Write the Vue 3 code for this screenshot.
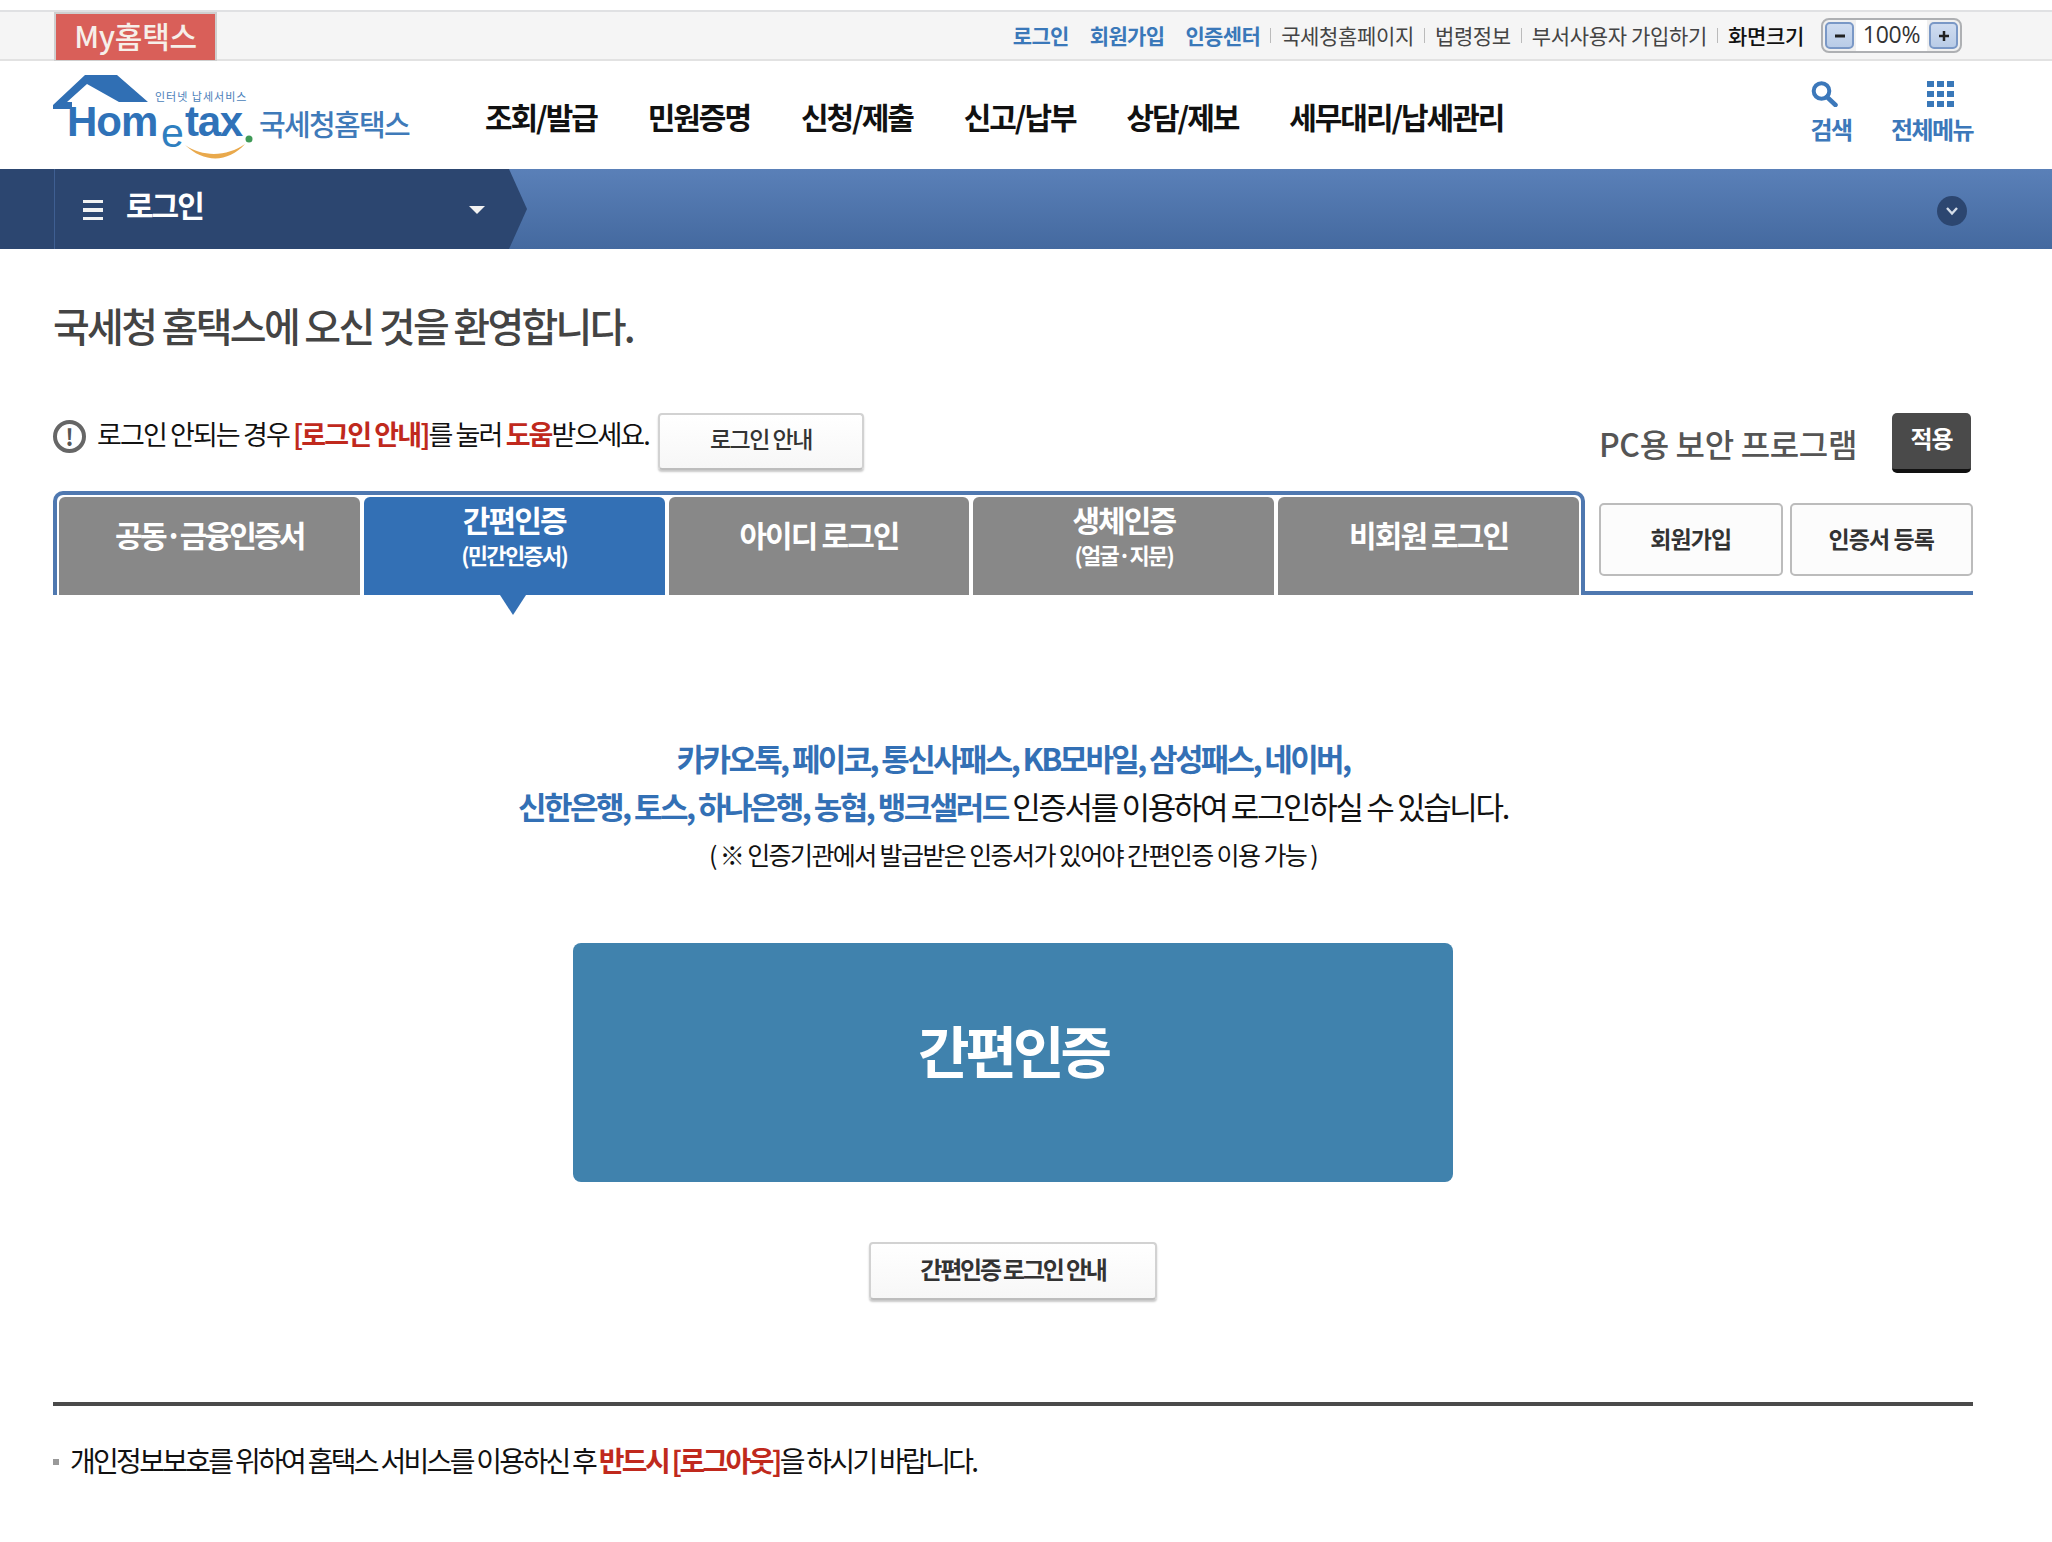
<script setup>
const navItems = ['조회/발급', '민원증명', '신청/제출', '신고/납부', '상담/제보', '세무대리/납세관리']
const tabs = [
  { title: '공동·금융인증서', tight: true },
  { title: '간편인증', sub: '(민간인증서)', active: true },
  { title: '아이디 로그인' },
  { title: '생체인증', sub: '(얼굴·지문)' },
  { title: '비회원 로그인' },
]
</script>

<template>
  <div class="page">
    <div class="topbar">
      <a class="my">My홈택스</a>
      <div class="util">
        <span class="blue ml0">로그인</span>
        <span class="blue">회원가입</span>
        <span class="blue">인증센터</span>
        <i class="sep"></i>
        <span>국세청홈페이지</span>
        <i class="sep"></i>
        <span>법령정보</span>
        <i class="sep"></i>
        <span>부서사용자 가입하기</span>
        <i class="sep"></i>
        <span class="size">화면크기</span>
        <div class="zoom">
          <b class="zbtn"><svg width="12" height="12" viewBox="0 0 12 12"><path d="M1 6H11" stroke="#222" stroke-width="3" /></svg></b>
          <span class="pct">100%</span>
          <b class="zbtn"><svg width="12" height="12" viewBox="0 0 12 12"><path d="M1 6H11M6 1V11" stroke="#222" stroke-width="2.500" /></svg></b>
        </div>
      </div>
    </div>

    <header class="header">
      <svg class="logo" width="357" height="85" viewBox="0 0 357 85">
        <path d="M31 0H63L94 27H65L33 9 13 27H18V34H-1V30Z" fill="#306fb4" />
        <text x="101" y="26" class="lg-small">인터넷 납세서비스</text>
        <text x="13" y="61" class="lg-home">Hom</text>
        <text x="107" y="72" class="lg-e">e</text>
        <text x="131" y="61" class="lg-home lg-tax">tax</text>
        <circle cx="195" cy="64" r="3.500" fill="#3f9a57" />
        <path d="M131 70C150 88 174 88 191 69C174 81 150 83 131 70Z" fill="#e9a94c" />
        <text x="205" y="61" class="lg-kr">국세청홈택스</text>
      </svg>
      <nav class="nav">
        <a v-for="item in navItems" :key="item">{{ item }}</a>
      </nav>
      <div class="tools">
        <div class="tool tool-search">
          <svg width="27" height="26" viewBox="0 0 27 26">
            <circle cx="10.500" cy="10" r="7.800" fill="none" stroke="#3c78ba" stroke-width="4" />
            <path d="M16 16L24.500 24" stroke="#3c78ba" stroke-width="4.500" stroke-linecap="round" />
          </svg>
          <span>검색</span>
        </div>
        <div class="tool tool-menu">
          <svg width="27" height="26" viewBox="0 0 27 26" fill="#3a78b9">
            <rect x="0" y="0" width="7" height="6" /><rect x="10" y="0" width="7" height="6" /><rect x="20" y="0" width="7" height="6" />
            <rect x="0" y="10" width="7" height="6" /><rect x="10" y="10" width="7" height="6" /><rect x="20" y="10" width="7" height="6" />
            <rect x="0" y="20" width="7" height="6" /><rect x="10" y="20" width="7" height="6" /><rect x="20" y="20" width="7" height="6" />
          </svg>
          <span>전체메뉴</span>
        </div>
      </div>
    </header>

    <div class="crumb">
      <div class="crumb-left">
        <div class="crumb-inner">
          <span class="burger"><i></i><i></i><i></i></span>
          <span class="crumb-title">로그인</span>
          <span class="caret"></span>
        </div>
      </div>
      <span class="circle">
        <svg width="16" height="12" viewBox="0 0 16 12"><path d="M3 3L8 8.500 13 3" fill="none" stroke="#d5dde8" stroke-width="2.400" /></svg>
      </span>
    </div>

    <main class="main">
      <h1 class="welcome">국세청 홈택스에 오신 것을 환영합니다.</h1>

      <div class="notice-row">
        <div class="notice">
          <span class="warn">!</span>
          <p>로그인 안되는 경우 <strong>[로그인 안내]</strong>를 눌러 <strong>도움</strong>받으세요.</p>
          <button class="btn guide">로그인 안내</button>
        </div>
        <div class="pc">
          <span class="pc-label">PC용 보안 프로그램</span>
          <button class="apply">적용</button>
        </div>
      </div>

      <div class="tab-row">
        <div class="tabs">
          <div v-for="t in tabs" :key="t.title" class="tab" :class="{ active: t.active, tight: t.tight }">
            <span class="tab-title">{{ t.title }}</span>
            <span v-if="t.sub" class="tab-sub">{{ t.sub }}</span>
          </div>
        </div>
        <div class="tab-side">
          <button class="side-btn">회원가입</button>
          <button class="side-btn">인증서 등록</button>
        </div>
      </div>

      <section class="simple">
        <p class="l1">카카오톡, 페이코, 통신사패스, KB모바일, 삼성패스, 네이버,</p>
        <p class="l2"><em>신한은행, 토스, 하나은행, 농협, 뱅크샐러드</em> 인증서를 이용하여 로그인하실 수 있습니다.</p>
        <p class="l3">( ※ 인증기관에서 발급받은 인증서가 있어야 간편인증 이용 가능 )</p>
        <button class="big">간편인증</button>
        <button class="btn guide2">간편인증 로그인 안내</button>
      </section>

      <div class="foot">
        <i class="bullet"></i>
        <p>개인정보보호를 위하여 홈택스 서비스를 이용하신 후 <strong>반드시 [로그아웃]</strong>을 하시기 바랍니다.</p>
      </div>
    </main>
  </div>
</template>

<style>
html, body { margin: 0; background: #fff; }
</style>

<style scoped>
.page {
  width: 2052px;
  height: 1542px;
  overflow: hidden;
  background: #fff;
  font-family: "Noto Sans CJK KR", "Noto Sans", sans-serif;
  color: #222;
  box-sizing: border-box;
  padding-top: 10px;
}
p, h1 { margin: 0; }
button { font-family: inherit; cursor: pointer; padding: 0; }

.topbar {
  height: 51px;
  box-sizing: border-box;
  background: #f5f5f5;
  border-top: 2px solid #e0e1e3;
  border-bottom: 2px solid #e2e2e2;
  display: flex;
  justify-content: space-between;
  padding: 0 90px 0 54px;
}
.my {
  width: 163px;
  height: 49px;
  box-sizing: border-box;
  background: #d95f59;
  border: 2px solid #cfcfcf;
  border-bottom-width: 1px;
  color: #f6efe9;
  font-size: 30px;
  font-weight: 500;
  letter-spacing: -0.3px;
  text-align: center;
  line-height: 42px;
}
.util {
  display: flex;
  align-items: center;
  font-size: 21px;
  letter-spacing: -0.35px;
  color: #444;
}
.util span { margin-left: 10px; margin-bottom: 2px; white-space: nowrap; }
.util .blue { color: #3a78b9; font-weight: 700; margin-left: 21px; letter-spacing: -0.65px; }
.util .ml0 { margin-left: 0; }
.sep { width: 1px; height: 15px; background: #bbb; margin-left: 10px; }
.util .size { color: #111; font-weight: 500; letter-spacing: -0.3px; }
.util .zoom {
  display: flex;
  align-items: center;
  justify-content: space-between;
  width: 141px;
  height: 35px;
  margin-left: 17px;
  box-sizing: border-box;
  border: 2px solid #aeb0b3;
  border-radius: 8px;
  background: linear-gradient(90deg, #f0f0f0 24%, #fff 24%, #fff 76%, #f0f0f0 76%);
  padding: 0 2px;
}
.util .pct {
  margin: 0 0 4px;
  font-family: "Open Sans", sans-serif;
  font-size: 23px;
  letter-spacing: -0.3px;
  color: #333;
}
.zbtn {
  width: 29px;
  height: 27px;
  box-sizing: border-box;
  border: 2px solid #7a98c6;
  border-radius: 5px;
  background: linear-gradient(#cfdcf0, #b9cce7);
  display: flex;
  align-items: center;
  justify-content: center;
}

.header {
  height: 108px;
  display: flex;
  align-items: center;
  padding: 0 79px 0 54px;
}
.logo { flex: none; margin: 5px 74px 0 0; overflow: visible; }
.lg-small { font-size: 11px; fill: #4a7eb9; letter-spacing: 1px; }
.lg-home { font-family: "Liberation Sans", sans-serif; font-size: 42px; font-weight: 700; fill: #2f72b8; letter-spacing: -1px; }
.lg-tax { letter-spacing: -1.300px; }
.lg-e { font-family: "Liberation Sans", sans-serif; font-size: 41px; fill: #2f7fc0; }
.lg-kr { font-size: 29px; font-weight: 500; fill: #3f7ab9; letter-spacing: -1.700px; }
.nav { display: flex; gap: 51px; margin-top: 2px; }
.nav a {
  font-size: 30px;
  font-weight: 700;
  letter-spacing: -2.050px;
  color: #111;
  white-space: nowrap;
}
.tools { margin-left: auto; align-self: flex-start; display: flex; gap: 39.500px; margin-top: 20px; }
.tool {
  display: flex;
  flex-direction: column;
  color: #3c78ba;
  font-size: 24px;
  font-weight: 700;
  letter-spacing: -1.600px;
  line-height: 32px;
}
.tool svg { margin-bottom: 6px; flex: none; }
.tool-menu { align-items: center; }
.tool-menu svg { margin-left: 16px; }

.crumb {
  height: 80px;
  display: flex;
  align-items: center;
  justify-content: space-between;
  padding-right: 85px;
  background: linear-gradient(#5a80b8, #44699f);
}
.crumb-left {
  position: relative;
  width: 509px;
  height: 100%;
  box-sizing: border-box;
  padding-left: 54px;
  background: #2c4670;
}
.crumb-left::after {
  content: "";
  position: absolute;
  left: 509px;
  top: 0;
  border-left: 18px solid #2c4670;
  border-top: 40px solid transparent;
  border-bottom: 40px solid transparent;
}
.crumb-inner {
  height: 100%;
  box-sizing: border-box;
  border-left: 1px solid #3f5f92;
  display: flex;
  align-items: center;
  padding-left: 28px;
}
.burger { display: flex; flex-direction: column; gap: 5px; width: 20px; margin-top: 2px; }
.burger i { height: 3.500px; background: #f2f2f2; }
.crumb-title {
  margin: -10px 0 0 23px;
  color: #fff;
  font-size: 30px;
  font-weight: 700;
  letter-spacing: -2px;
}
.caret {
  margin: 2px 24px 0 auto;
  border-top: 8px solid #f2f2f2;
  border-left: 8px solid transparent;
  border-right: 8px solid transparent;
}
.circle {
  width: 30px;
  height: 30px;
  border-radius: 50%;
  background: #2c4670;
  display: flex;
  align-items: center;
  justify-content: center;
  margin-top: 3px;
}

.main { padding: 0 79px 0 53px; }
.welcome {
  margin-top: 49px;
  height: 54px;
  font-size: 40px;
  line-height: 54px;
  font-weight: 500;
  letter-spacing: -2.700px;
  color: #444;
}
.notice-row {
  margin-top: 61px;
  display: flex;
  justify-content: space-between;
  height: 60px;
}
.notice { display: flex; align-items: flex-start; }
.warn {
  width: 33px;
  height: 33px;
  box-sizing: border-box;
  border: 4px solid #666;
  border-radius: 50%;
  margin-top: 7px;
  color: #555;
  font-size: 23px;
  font-weight: 700;
  line-height: 24px;
  text-align: center;
}
.notice p {
  margin-left: 11px;
  font-size: 27px;
  line-height: 42px;
  letter-spacing: -1.900px;
  color: #111;
  white-space: nowrap;
}
.notice strong, .foot strong { color: #c0291d; font-weight: 700; }
.btn {
  background: linear-gradient(#fff, #f7f7f7);
  border: 2px solid #d2d2d2;
  border-bottom-color: #bdbdbd;
  border-radius: 4px;
  box-shadow: 0 2px 2px #c9c9c9;
  color: #333;
  font-size: 23px;
  font-weight: 500;
  letter-spacing: -1.500px;
}
.guide { width: 206px; height: 57px; margin-left: 9px; padding-bottom: 8px; }
.pc { display: flex; align-items: flex-start; margin-right: 2px; }
.pc-label {
  margin-top: 8px;
  font-size: 32px;
  line-height: 44px;
  font-weight: 500;
  letter-spacing: -0.350px;
  color: #555;
}
.apply {
  width: 79px;
  height: 60px;
  margin-left: 35px;
  padding-bottom: 8px;
  border: 0;
  border-bottom: 4px solid #111;
  border-radius: 5px;
  background: #4a4a4a;
  color: #fff;
  font-size: 24px;
  font-weight: 700;
  letter-spacing: -1px;
}

.tab-row { margin-top: 18px; display: flex; height: 104px; }
.tabs {
  width: 1532px;
  box-sizing: border-box;
  border: 4px solid #4f78b0;
  border-bottom: 0;
  border-radius: 10px 10px 0 0;
  padding: 2px 2px 0;
  display: flex;
  gap: 4px;
}
.tab {
  position: relative;
  flex: 1;
  height: 98px;
  box-sizing: border-box;
  background: #888;
  border-radius: 6px 6px 0 0;
  color: #fff;
  display: flex;
  flex-direction: column;
  align-items: center;
  padding-top: 15px;
}
.tab.active { background: #3370b5; }
.tab:has(.tab-sub) { padding-top: 0; }
.tab-title {
  font-size: 30px;
  line-height: 44px;
  font-weight: 700;
  letter-spacing: -1.900px;
  white-space: nowrap;
}
.tab.tight .tab-title { letter-spacing: -2.800px; }
.tab-sub {
  margin-top: -3px;
  font-size: 22px;
  line-height: 32px;
  font-weight: 700;
  letter-spacing: -1.700px;
}
.tab.active::after {
  content: "";
  position: absolute;
  left: 136px;
  top: 98px;
  border-top: 20px solid #3370b5;
  border-left: 13px solid transparent;
  border-right: 13px solid transparent;
}
.tab-side {
  width: 388px;
  box-sizing: border-box;
  border-bottom: 4px solid #4f78b0;
  display: flex;
  gap: 7px;
  padding: 12px 0 0 14px;
}
.side-btn {
  width: 184px;
  height: 73px;
  box-sizing: border-box;
  padding-bottom: 4px;
  background: #fcfcfc;
  border: 2px solid #bcbcbc;
  border-radius: 5px;
  color: #333;
  font-size: 23px;
  font-weight: 700;
  letter-spacing: -0.900px;
}

.simple {
  display: flex;
  flex-direction: column;
  align-items: center;
  text-align: center;
  padding-top: 139px;
}
.simple p { white-space: nowrap; }
.l1, .l2 {
  font-size: 31px;
  line-height: 48px;
  letter-spacing: -2.350px;
  color: #111;
}
.l1 { letter-spacing: -2.650px; }
.l1, .l2 em {
  color: #3370b5;
  font-weight: 700;
  font-style: normal;
}
.l2 em { letter-spacing: -2.550px; }
.l3 {
  font-size: 25px;
  line-height: 48px;
  letter-spacing: -1.600px;
  color: #111;
}
.big {
  margin-top: 65px;
  width: 880px;
  height: 239px;
  padding-bottom: 28px;
  border: 0;
  border-radius: 8px;
  background: #4082ad;
  color: #fff;
  font-size: 56px;
  font-weight: 700;
  letter-spacing: -4px;
}
.guide2 { width: 288px; height: 58px; margin-top: 60px; padding-bottom: 5px; font-size: 24px; font-weight: 700; letter-spacing: -2.200px; }

.foot {
  margin-top: 102px;
  border-top: 4px solid #4a4a4a;
  padding-top: 30px;
  display: flex;
  align-items: center;
}
.bullet { width: 6px; height: 6px; background: #999; margin-top: 4px; flex: none; }
.foot p {
  margin-left: 11px;
  font-size: 28px;
  line-height: 48px;
  letter-spacing: -2.700px;
  color: #111;
  white-space: nowrap;
}
</style>
